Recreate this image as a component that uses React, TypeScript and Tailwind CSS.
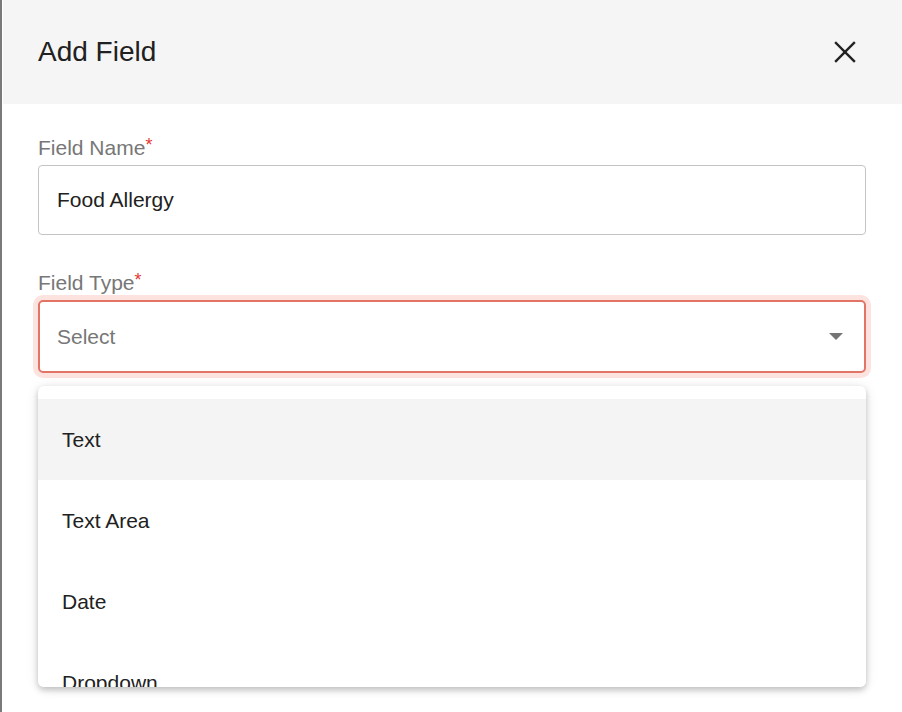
import { useState } from 'react';

const FIELD_TYPES = ['Text', 'Text Area', 'Date', 'Dropdown'];

function CloseIcon() {
  return (
    <svg width="22" height="22" viewBox="0 0 22 22" fill="none" stroke="#212121" strokeWidth="2.4" strokeLinecap="square">
      <line x1="2" y1="2" x2="20" y2="20" />
      <line x1="20" y1="2" x2="2" y2="20" />
    </svg>
  );
}

export default function App() {
  const [name, setName] = useState('Food Allergy');

  return (
    <div
      className="w-[902px] h-[712px] overflow-hidden bg-white border-l-2 border-[#7a7a7a] flex flex-col text-[#212121]"
      style={{ fontFamily: '"Liberation Sans", Arial, sans-serif' }}
    >
      <div className="h-[104px] shrink-0 bg-[#f5f5f5] ml-px flex items-center justify-between pl-[35px] pr-[46px]">
        <h1 className="text-[28px] font-medium leading-none text-[#212121]">Add Field</h1>
        <button className="w-[22px] h-[22px] flex items-center justify-center">
          <CloseIcon />
        </button>
      </div>

      <div className="flex flex-col pl-[36px] pr-[36px] pt-[32px]">
        <label className="text-[21px] leading-[24px] text-[#777777]">
          Field Name<span className="relative -top-[3px] text-[#e53935] text-[18px] align-top">*</span>
        </label>
        <input
          value={name}
          onChange={(e) => setName(e.target.value)}
          className="mt-[5px] h-[70px] w-full rounded-[4px] border border-[#c4c4c4] px-[18px] text-[21px] text-[#212121] outline-none"
        />

        <label className="mt-[36px] text-[21px] leading-[24px] text-[#777777]">
          Field Type<span className="relative -top-[3px] text-[#e53935] text-[18px] align-top">*</span>
        </label>
        <div className="relative mt-[5px]">
          <div className="h-[73px] w-full rounded-[5px] border-2 border-[#e27466] ring-[5px] ring-[#fde3df] flex items-center justify-between pl-[17px] pr-[21px]">
            <span className="text-[21px] text-[#777777]">Select</span>
            <svg width="14" height="7" viewBox="0 0 14 7">
              <path d="M0 0 L14 0 L7 7 Z" fill="#757575" />
            </svg>
          </div>

          <div className="absolute left-0 right-0 top-[86px] h-[301px] overflow-hidden rounded-[6px] bg-white pt-[13px] shadow-[0_3px_6px_rgba(0,0,0,0.22),0_1px_14px_rgba(0,0,0,0.08)]">
            {FIELD_TYPES.map((t, i) => (
              <div
                key={t}
                className={`h-[81px] shrink-0 flex items-center pl-[24px] text-[21px] text-[#212121] ${i === 0 ? 'bg-[#f4f4f4]' : 'bg-white'}`}
              >
                {t}
              </div>
            ))}
          </div>
        </div>
      </div>
    </div>
  );
}
